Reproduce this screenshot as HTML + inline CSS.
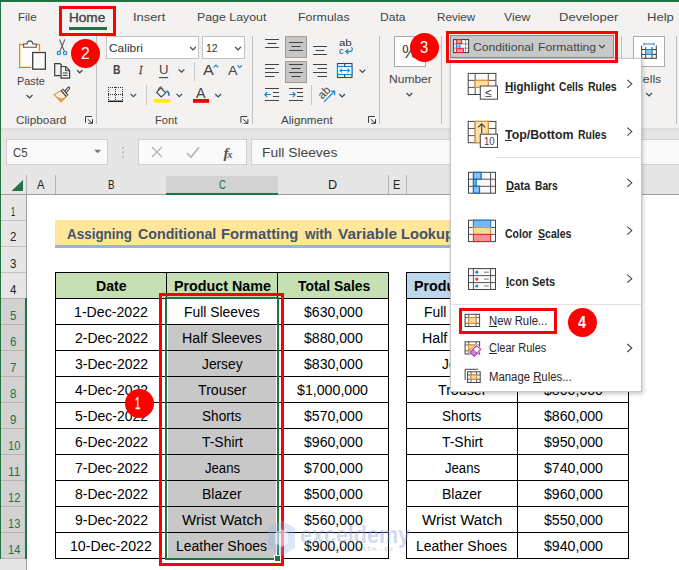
<!DOCTYPE html>
<html><head><meta charset="utf-8"><title>Excel Conditional Formatting</title>
<style>
html,body{margin:0;padding:0}
body{width:679px;height:570px;overflow:hidden;position:relative;background:#fff;font-family:"Liberation Sans",sans-serif}
.b{position:absolute;box-sizing:border-box}
.t{position:absolute;white-space:nowrap;transform-origin:0 0;line-height:1;display:block}
.t u{text-decoration:underline;text-underline-offset:1px}
svg{position:absolute;left:0;top:0;overflow:visible}
.circ{position:absolute;border-radius:50%;background:#fe0000}
</style></head><body>

<div class="b" style="left:0px;top:0px;width:679px;height:128px;background:#f3f2f1"></div>
<div class="b" style="left:0px;top:128px;width:679px;height:4px;background:linear-gradient(#dcdcdc,#e6e6e6)"></div>
<div class="b" style="left:0px;top:132px;width:679px;height:44px;background:#e6e6e6"></div>
<div class="b" style="left:0px;top:0px;width:679px;height:2px;background:#217346"></div>
<div class="b" style="left:68.8px;top:27px;width:38.3px;height:3px;background:#217346"></div>
<div class="b" style="left:96px;top:36px;width:1px;height:88px;background:#bfbfbf"></div>
<div class="b" style="left:252px;top:36px;width:1px;height:88px;background:#bfbfbf"></div>
<div class="b" style="left:379px;top:36px;width:1px;height:88px;background:#bfbfbf"></div>
<div class="b" style="left:441px;top:36px;width:1px;height:88px;background:#bfbfbf"></div>
<div class="b" style="left:621px;top:36px;width:1px;height:88px;background:#bfbfbf"></div>
<div class="b" style="left:676px;top:36px;width:1px;height:88px;background:#bfbfbf"></div>
<div class="b" style="left:194px;top:62px;width:1px;height:19px;background:#c8c6c4"></div>
<div class="b" style="left:146px;top:85px;width:1px;height:20px;background:#c8c6c4"></div>
<div class="b" style="left:311px;top:85px;width:1px;height:20px;background:#c8c6c4"></div>
<div class="b" style="left:105.5px;top:36px;width:93.5px;height:22.5px;background:#fff;border:1px solid #c3c3c3"></div>
<div class="b" style="left:202px;top:36px;width:43px;height:22.5px;background:#fff;border:1px solid #c3c3c3"></div>
<div class="b" style="left:285px;top:36px;width:22px;height:22px;background:#c8c6c4;border:1px solid #a19f9d"></div>
<div class="b" style="left:285px;top:60.5px;width:22px;height:22px;background:#c8c6c4;border:1px solid #a19f9d"></div>
<div class="b" style="left:394px;top:36px;width:32px;height:30.7px;background:#fff;border:1px solid #ababab"></div>
<div class="b" style="left:633px;top:36px;width:32px;height:30.7px;background:#fff;border:1px solid #ababab"></div>
<div class="b" style="left:450px;top:35px;width:163.5px;height:23.3px;background:#c8c8c8;border:1px solid #8a8a8a"></div>
<div class="b" style="left:6px;top:139px;width:101.5px;height:25.5px;background:#fafafa;border:1px solid #cfcfcf"></div>
<div class="b" style="left:138px;top:139px;width:109px;height:25.5px;background:#fafafa;border:1px solid #cfcfcf"></div>
<div class="b" style="left:251px;top:139px;width:440px;height:25.5px;background:#fafafa;border:1px solid #cfcfcf"></div>
<div class="b" style="left:0px;top:175.5px;width:679px;height:19px;background:#e6e6e6;border-bottom:1px solid #9f9f9f"></div>
<div class="b" style="left:166px;top:175.5px;width:111.5px;height:19.5px;background:#d2d2d2;border-bottom:2px solid #217346"></div>
<div class="b" style="left:26px;top:175px;width:1px;height:19px;background:#b5b5b5"></div>
<div class="b" style="left:55px;top:175px;width:1px;height:19px;background:#b5b5b5"></div>
<div class="b" style="left:388px;top:175px;width:1px;height:19px;background:#b5b5b5"></div>
<div class="b" style="left:406px;top:175px;width:1px;height:19px;background:#b5b5b5"></div>
<div class="b" style="left:0px;top:194.5px;width:26.5px;height:376px;background:#e6e6e6;border-right:1px solid #9f9f9f"></div>
<div class="b" style="left:0px;top:298px;width:27px;height:260.5px;background:#d2d2d2;border-right:2px solid #217346"></div>
<div class="b" style="left:1px;top:220px;width:25px;height:1px;background:#c2c2c2"></div>
<div class="b" style="left:1px;top:246px;width:25px;height:1px;background:#c2c2c2"></div>
<div class="b" style="left:1px;top:272px;width:25px;height:1px;background:#c2c2c2"></div>
<div class="b" style="left:1px;top:298px;width:24px;height:1px;background:#b4b4b4"></div>
<div class="b" style="left:1px;top:324px;width:24px;height:1px;background:#b4b4b4"></div>
<div class="b" style="left:1px;top:350px;width:24px;height:1px;background:#b4b4b4"></div>
<div class="b" style="left:1px;top:376px;width:24px;height:1px;background:#b4b4b4"></div>
<div class="b" style="left:1px;top:402px;width:24px;height:1px;background:#b4b4b4"></div>
<div class="b" style="left:1px;top:428px;width:24px;height:1px;background:#b4b4b4"></div>
<div class="b" style="left:1px;top:454px;width:24px;height:1px;background:#b4b4b4"></div>
<div class="b" style="left:1px;top:480px;width:24px;height:1px;background:#b4b4b4"></div>
<div class="b" style="left:1px;top:506px;width:24px;height:1px;background:#b4b4b4"></div>
<div class="b" style="left:1px;top:532px;width:24px;height:1px;background:#b4b4b4"></div>
<div class="b" style="left:1px;top:558px;width:24px;height:1px;background:#b4b4b4"></div>
<div class="b" style="left:0px;top:0px;width:1px;height:558.5px;background:#217346"></div>
<div class="b" style="left:55px;top:220px;width:574px;height:28px;background:#ffe699;border-bottom:3px solid #9bb2e0"></div>
<div class="b" style="left:168px;top:324px;width:108px;height:234px;background:#c8c8c8"></div>
<div class="b" style="left:55px;top:272px;width:334px;height:26px;background:#c6e0b4"></div>
<div class="b" style="left:55px;top:272px;width:334px;height:1px;background:#000"></div>
<div class="b" style="left:55px;top:298px;width:334px;height:1px;background:#000"></div>
<div class="b" style="left:55px;top:324px;width:334px;height:1px;background:#000"></div>
<div class="b" style="left:55px;top:350px;width:334px;height:1px;background:#000"></div>
<div class="b" style="left:55px;top:376px;width:334px;height:1px;background:#000"></div>
<div class="b" style="left:55px;top:402px;width:334px;height:1px;background:#000"></div>
<div class="b" style="left:55px;top:428px;width:334px;height:1px;background:#000"></div>
<div class="b" style="left:55px;top:454px;width:334px;height:1px;background:#000"></div>
<div class="b" style="left:55px;top:480px;width:334px;height:1px;background:#000"></div>
<div class="b" style="left:55px;top:506px;width:334px;height:1px;background:#000"></div>
<div class="b" style="left:55px;top:532px;width:334px;height:1px;background:#000"></div>
<div class="b" style="left:55px;top:558px;width:334px;height:1px;background:#000"></div>
<div class="b" style="left:55px;top:272px;width:1px;height:287px;background:#000"></div>
<div class="b" style="left:166px;top:272px;width:1px;height:287px;background:#000"></div>
<div class="b" style="left:277px;top:272px;width:1px;height:287px;background:#000"></div>
<div class="b" style="left:388px;top:272px;width:1px;height:287px;background:#000"></div>
<div class="b" style="left:406px;top:272px;width:223px;height:26px;background:#bdd7ee"></div>
<div class="b" style="left:406px;top:272px;width:223px;height:1px;background:#000"></div>
<div class="b" style="left:406px;top:298px;width:223px;height:1px;background:#000"></div>
<div class="b" style="left:406px;top:324px;width:223px;height:1px;background:#000"></div>
<div class="b" style="left:406px;top:350px;width:223px;height:1px;background:#000"></div>
<div class="b" style="left:406px;top:376px;width:223px;height:1px;background:#000"></div>
<div class="b" style="left:406px;top:402px;width:223px;height:1px;background:#000"></div>
<div class="b" style="left:406px;top:428px;width:223px;height:1px;background:#000"></div>
<div class="b" style="left:406px;top:454px;width:223px;height:1px;background:#000"></div>
<div class="b" style="left:406px;top:480px;width:223px;height:1px;background:#000"></div>
<div class="b" style="left:406px;top:506px;width:223px;height:1px;background:#000"></div>
<div class="b" style="left:406px;top:532px;width:223px;height:1px;background:#000"></div>
<div class="b" style="left:406px;top:558px;width:223px;height:1px;background:#000"></div>
<div class="b" style="left:406px;top:272px;width:1px;height:287px;background:#000"></div>
<div class="b" style="left:517px;top:272px;width:1px;height:287px;background:#000"></div>
<div class="b" style="left:628px;top:272px;width:1px;height:287px;background:#000"></div>
<div class="b" style="left:165px;top:297px;width:114px;height:263px;border:2px solid #217346"></div>
<div class="b" style="left:274px;top:555px;width:7px;height:7px;background:#217346;border:1px solid #fff"></div>
<div class="b" style="left:159px;top:293px;width:125px;height:273px;border:3px solid #fe0000"></div>
<span class="t" style="left:18.40px;top:12.00px;font-size:11.5px;color:#444;transform:scaleX(1.0036)">File</span>
<span class="t" style="left:69.40px;top:12.00px;font-size:12px;color:#444;transform:scaleX(1.1319);-webkit-text-stroke:0.35px #444">Home</span>
<span class="t" style="left:132.88px;top:12.00px;font-size:11.5px;color:#444;transform:scaleX(1.1202)">Insert</span>
<span class="t" style="left:197.40px;top:12.00px;font-size:11.5px;color:#444;transform:scaleX(1.0736)">Page Layout</span>
<span class="t" style="left:298.40px;top:12.00px;font-size:11.5px;color:#444;transform:scaleX(1.0794)">Formulas</span>
<span class="t" style="left:380.40px;top:12.00px;font-size:11.5px;color:#444;transform:scaleX(1.0484)">Data</span>
<span class="t" style="left:436.60px;top:12.00px;font-size:11.5px;color:#444;transform:scaleX(1.0156)">Review</span>
<span class="t" style="left:504.00px;top:12.00px;font-size:11.5px;color:#444;transform:scaleX(1.0624)">View</span>
<span class="t" style="left:559.00px;top:12.00px;font-size:11.5px;color:#444;transform:scaleX(1.1333)">Developer</span>
<span class="t" style="left:647.00px;top:12.00px;font-size:11.5px;color:#444;transform:scaleX(1.1352)">Help</span>
<span class="t" style="left:16.75px;top:76.00px;font-size:11.5px;color:#444;transform:scaleX(0.9479)">Paste</span>
<span class="t" style="left:15.50px;top:115.00px;font-size:11.5px;color:#444;transform:scaleX(1.0240)">Clipboard</span>
<span class="t" style="left:108.50px;top:43.00px;font-size:11.5px;color:#333;transform:scaleX(1.0363)">Calibri</span>
<span class="t" style="left:205.90px;top:43.00px;font-size:11.5px;color:#333;transform:scaleX(0.9116)">12</span>
<span class="t" style="left:112.50px;top:64.00px;font-size:12.5px;color:#444;transform:scaleX(0.8333);font-weight:700">B</span>
<span class="t" style="left:138.75px;top:63.00px;font-size:13.5px;color:#444;transform:scaleX(0.7500);font-style:italic;font-family:'Liberation Serif',serif;-webkit-text-stroke:0.3px #444">I</span>
<span class="t" style="left:159.25px;top:64.00px;font-size:12px;color:#444;transform:scaleX(1.0938)">U</span>
<span class="t" style="left:203.00px;top:62.00px;font-size:15.5px;color:#444;transform:scaleX(1.0455)">A</span>
<span class="t" style="left:228.00px;top:65.00px;font-size:12px;color:#444;transform:scaleX(1.1875)">A</span>
<span class="t" style="left:196.30px;top:86.00px;font-size:14px;color:#444;transform:scaleX(1.0200)">A</span>
<span class="t" style="left:154.50px;top:115.00px;font-size:11.5px;color:#444;transform:scaleX(0.9657)">Font</span>
<span class="t" style="left:281.25px;top:115.00px;font-size:11.5px;color:#444;transform:scaleX(1.0107)">Alignment</span>
<span class="t" style="left:388.75px;top:74.00px;font-size:11.5px;color:#444;transform:scaleX(1.0469)">Number</span>
<span class="t" style="left:402.00px;top:43.00px;font-size:18.5px;color:#444;transform:scaleX(0.9688)">%</span>
<span class="t" style="left:472.70px;top:42.00px;font-size:11.5px;color:#444;transform:scaleX(1.0529)">Conditional</span>
<span class="t" style="left:537.60px;top:42.00px;font-size:11.5px;color:#444;transform:scaleX(1.0574)">Formatting</span>
<span class="t" style="left:633.50px;top:74.00px;font-size:11.5px;color:#444;transform:scaleX(1.0655)">Cells</span>
<span class="t" style="left:13.30px;top:147.00px;font-size:12.5px;color:#444;transform:scaleX(0.9110)">C5</span>
<span class="t" style="left:261.89px;top:147.00px;font-size:12.5px;color:#444;transform:scaleX(1.1072)">Full Sleeves</span>
<span class="t" style="left:37.00px;top:179.00px;font-size:12.5px;color:#222;transform:scaleX(0.9000)">A</span>
<span class="t" style="left:108.11px;top:179.00px;font-size:12.5px;color:#222;transform:scaleX(0.7857)">B</span>
<span class="t" style="left:219.20px;top:179.00px;font-size:12.5px;color:#217346;transform:scaleX(0.7556)">C</span>
<span class="t" style="left:328.09px;top:179.00px;font-size:12.5px;color:#222;transform:scaleX(1.0125)">D</span>
<span class="t" style="left:393.43px;top:179.00px;font-size:12.5px;color:#222;transform:scaleX(0.8714)">E</span>
<span class="t" style="left:11.20px;top:205.00px;font-size:13px;color:#222;transform:scaleX(0.5714)">1</span>
<span class="t" style="left:10.10px;top:230.00px;font-size:13px;color:#222;transform:scaleX(0.8857)">2</span>
<span class="t" style="left:10.10px;top:257.00px;font-size:13px;color:#222;transform:scaleX(0.8857)">3</span>
<span class="t" style="left:10.10px;top:283.00px;font-size:13px;color:#222;transform:scaleX(0.8857)">4</span>
<span class="t" style="left:10.10px;top:309.00px;font-size:13px;color:#217346;transform:scaleX(0.8857)">5</span>
<span class="t" style="left:10.10px;top:335.00px;font-size:13px;color:#217346;transform:scaleX(0.8857)">6</span>
<span class="t" style="left:10.10px;top:361.00px;font-size:13px;color:#217346;transform:scaleX(0.8857)">7</span>
<span class="t" style="left:10.10px;top:387.00px;font-size:13px;color:#217346;transform:scaleX(0.8857)">8</span>
<span class="t" style="left:10.10px;top:413.00px;font-size:13px;color:#217346;transform:scaleX(0.8857)">9</span>
<span class="t" style="left:8.20px;top:439.00px;font-size:13px;color:#217346;transform:scaleX(0.8573)">10</span>
<span class="t" style="left:8.20px;top:465.00px;font-size:13px;color:#217346;transform:scaleX(0.9197)">11</span>
<span class="t" style="left:8.20px;top:491.00px;font-size:13px;color:#217346;transform:scaleX(0.8573)">12</span>
<span class="t" style="left:8.20px;top:517.00px;font-size:13px;color:#217346;transform:scaleX(0.8573)">13</span>
<span class="t" style="left:8.20px;top:543.00px;font-size:13px;color:#217346;transform:scaleX(0.8573)">14</span>
<span class="t" style="left:67.40px;top:226.00px;font-size:15px;color:#44546a;transform:scaleX(0.8958);font-weight:700">Assigning</span>
<span class="t" style="left:138.00px;top:226.00px;font-size:15px;color:#44546a;transform:scaleX(0.9488);font-weight:700">Conditional</span>
<span class="t" style="left:220.71px;top:226.00px;font-size:15px;color:#44546a;transform:scaleX(0.9862);font-weight:700">Formatting</span>
<span class="t" style="left:305.20px;top:226.00px;font-size:15px;color:#44546a;transform:scaleX(0.9050);font-weight:700">with</span>
<span class="t" style="left:338.40px;top:226.00px;font-size:15px;color:#44546a;transform:scaleX(1.0245);font-weight:700">Variable</span>
<span class="t" style="left:401.22px;top:226.00px;font-size:15px;color:#44546a;transform:scaleX(0.9775);font-weight:700">Lookup</span>
<span class="t" style="left:459.50px;top:226.00px;font-size:15px;color:#44546a;transform:scaleX(1.0471);font-weight:700">Table</span>
<span class="t" style="left:503.47px;top:226.00px;font-size:15px;color:#44546a;transform:scaleX(1.0273);font-weight:700">in</span>
<span class="t" style="left:521.46px;top:226.00px;font-size:15px;color:#44546a;transform:scaleX(1.0386);font-weight:700">Excel</span>
<span class="t" style="left:95.60px;top:279.00px;font-size:14px;color:#000;transform:scaleX(1.0079);font-weight:700">Date</span>
<span class="t" style="left:173.80px;top:279.00px;font-size:14px;color:#000;transform:scaleX(1.0218);font-weight:700">Product Name</span>
<span class="t" style="left:297.60px;top:279.00px;font-size:14px;color:#000;transform:scaleX(0.9905);font-weight:700">Total Sales</span>
<span class="t" style="left:413.80px;top:279.00px;font-size:14px;color:#000;transform:scaleX(1.0218);font-weight:700">Product Name</span>
<span class="t" style="left:537.60px;top:279.00px;font-size:14px;color:#000;transform:scaleX(0.9905);font-weight:700">Total Sales</span>
<span class="t" style="left:73.59px;top:305.00px;font-size:14px;color:#000;transform:scaleX(1.0115)">1-Dec-2022</span>
<span class="t" style="left:183.76px;top:305.00px;font-size:14px;color:#000;transform:scaleX(0.9926)">Full Sleeves</span>
<span class="t" style="left:303.50px;top:305.00px;font-size:14px;color:#000;transform:scaleX(1.0067)">$630,000</span>
<span class="t" style="left:423.76px;top:305.00px;font-size:14px;color:#000;transform:scaleX(0.9926)">Full Sleeves</span>
<span class="t" style="left:543.60px;top:305.00px;font-size:14px;color:#000;transform:scaleX(1.0101)">$620,000</span>
<span class="t" style="left:74.60px;top:331.00px;font-size:14px;color:#000;transform:scaleX(0.9977)">2-Dec-2022</span>
<span class="t" style="left:181.68px;top:331.00px;font-size:14px;color:#000;transform:scaleX(1.0156)">Half Sleeves</span>
<span class="t" style="left:303.50px;top:331.00px;font-size:14px;color:#000;transform:scaleX(1.0067)">$880,000</span>
<span class="t" style="left:421.68px;top:331.00px;font-size:14px;color:#000;transform:scaleX(1.0156)">Half Sleeves</span>
<span class="t" style="left:543.60px;top:331.00px;font-size:14px;color:#000;transform:scaleX(1.0101)">$870,000</span>
<span class="t" style="left:74.60px;top:357.00px;font-size:14px;color:#000;transform:scaleX(0.9977)">3-Dec-2022</span>
<span class="t" style="left:201.85px;top:357.00px;font-size:14px;color:#000;transform:scaleX(0.9822)">Jersey</span>
<span class="t" style="left:303.50px;top:357.00px;font-size:14px;color:#000;transform:scaleX(1.0067)">$830,000</span>
<span class="t" style="left:441.85px;top:357.00px;font-size:14px;color:#000;transform:scaleX(0.9822)">Jersey</span>
<span class="t" style="left:543.60px;top:357.00px;font-size:14px;color:#000;transform:scaleX(1.0101)">$820,000</span>
<span class="t" style="left:74.60px;top:383.00px;font-size:14px;color:#000;transform:scaleX(0.9977)">4-Dec-2022</span>
<span class="t" style="left:197.75px;top:383.00px;font-size:14px;color:#000;transform:scaleX(1.0135)">Trouser</span>
<span class="t" style="left:297.40px;top:383.00px;font-size:14px;color:#000;transform:scaleX(1.0131)">$1,000,000</span>
<span class="t" style="left:437.75px;top:383.00px;font-size:14px;color:#000;transform:scaleX(1.0135)">Trouser</span>
<span class="t" style="left:543.60px;top:383.00px;font-size:14px;color:#000;transform:scaleX(1.0101)">$800,000</span>
<span class="t" style="left:74.60px;top:409.00px;font-size:14px;color:#000;transform:scaleX(0.9977)">5-Dec-2022</span>
<span class="t" style="left:202.45px;top:409.00px;font-size:14px;color:#000;transform:scaleX(0.9713)">Shorts</span>
<span class="t" style="left:303.50px;top:409.00px;font-size:14px;color:#000;transform:scaleX(1.0067)">$570,000</span>
<span class="t" style="left:442.45px;top:409.00px;font-size:14px;color:#000;transform:scaleX(0.9713)">Shorts</span>
<span class="t" style="left:543.60px;top:409.00px;font-size:14px;color:#000;transform:scaleX(1.0101)">$860,000</span>
<span class="t" style="left:74.60px;top:435.00px;font-size:14px;color:#000;transform:scaleX(0.9977)">6-Dec-2022</span>
<span class="t" style="left:201.55px;top:435.00px;font-size:14px;color:#000;transform:scaleX(0.9942)">T-Shirt</span>
<span class="t" style="left:303.50px;top:435.00px;font-size:14px;color:#000;transform:scaleX(1.0067)">$960,000</span>
<span class="t" style="left:441.55px;top:435.00px;font-size:14px;color:#000;transform:scaleX(0.9942)">T-Shirt</span>
<span class="t" style="left:543.60px;top:435.00px;font-size:14px;color:#000;transform:scaleX(1.0101)">$950,000</span>
<span class="t" style="left:74.60px;top:461.00px;font-size:14px;color:#000;transform:scaleX(0.9977)">7-Dec-2022</span>
<span class="t" style="left:204.60px;top:461.00px;font-size:14px;color:#000;transform:scaleX(0.9369)">Jeans</span>
<span class="t" style="left:303.50px;top:461.00px;font-size:14px;color:#000;transform:scaleX(1.0067)">$700,000</span>
<span class="t" style="left:444.60px;top:461.00px;font-size:14px;color:#000;transform:scaleX(0.9369)">Jeans</span>
<span class="t" style="left:543.60px;top:461.00px;font-size:14px;color:#000;transform:scaleX(1.0101)">$740,000</span>
<span class="t" style="left:74.60px;top:487.00px;font-size:14px;color:#000;transform:scaleX(0.9977)">8-Dec-2022</span>
<span class="t" style="left:201.60px;top:487.00px;font-size:14px;color:#000;transform:scaleX(0.9995)">Blazer</span>
<span class="t" style="left:303.50px;top:487.00px;font-size:14px;color:#000;transform:scaleX(1.0067)">$500,000</span>
<span class="t" style="left:441.60px;top:487.00px;font-size:14px;color:#000;transform:scaleX(0.9995)">Blazer</span>
<span class="t" style="left:543.60px;top:487.00px;font-size:14px;color:#000;transform:scaleX(1.0101)">$960,000</span>
<span class="t" style="left:74.60px;top:513.00px;font-size:14px;color:#000;transform:scaleX(0.9977)">9-Dec-2022</span>
<span class="t" style="left:182.35px;top:513.00px;font-size:14px;color:#000;transform:scaleX(1.0760)">Wrist Watch</span>
<span class="t" style="left:303.50px;top:513.00px;font-size:14px;color:#000;transform:scaleX(1.0067)">$560,000</span>
<span class="t" style="left:422.35px;top:513.00px;font-size:14px;color:#000;transform:scaleX(1.0760)">Wrist Watch</span>
<span class="t" style="left:543.60px;top:513.00px;font-size:14px;color:#000;transform:scaleX(1.0101)">$550,000</span>
<span class="t" style="left:69.69px;top:539.00px;font-size:14px;color:#000;transform:scaleX(1.0106)">10-Dec-2022</span>
<span class="t" style="left:176.10px;top:539.00px;font-size:14px;color:#000;transform:scaleX(0.9992)">Leather Shoes</span>
<span class="t" style="left:303.50px;top:539.00px;font-size:14px;color:#000;transform:scaleX(1.0067)">$900,000</span>
<span class="t" style="left:416.10px;top:539.00px;font-size:14px;color:#000;transform:scaleX(0.9992)">Leather Shoes</span>
<span class="t" style="left:543.60px;top:539.00px;font-size:14px;color:#000;transform:scaleX(1.0101)">$940,000</span>
<span class="t" style="left:339.00px;top:38.00px;font-size:9.5px;color:#333;transform:scaleX(1.2058)">ab</span>
<span class="t" style="left:339.30px;top:46.00px;font-size:9.5px;color:#333;transform:scaleX(0.9400)">c</span>
<span class="t" style="left:300.00px;top:524.00px;font-size:23.7px;color:rgba(140,165,230,.42);transform:scaleX(0.9083);font-weight:700">exceldemy</span>
<span class="t" style="left:318.00px;top:546.00px;font-size:6px;color:rgba(120,120,120,.38);transform:scaleX(1.4771)">EXCEL - DATA - BI</span>
<svg width="679" height="570" viewBox="0 0 679 570"><path d="M281.500 520.600l13.500 7.400v20l-13.500 8-13.500-8v-20z" fill="rgba(150,175,235,.32)"/><path d="M281.500 529l6.500 4v10l-6.500 4-6.500-4v-10z" fill="rgba(255,255,255,.5)"/></svg>
<span class="t" style="left:223.5px;top:143.5px;font:italic 700 15.5px 'Liberation Serif',serif;color:#555">f<span style="font-size:10.5px;margin-left:-1.5px">x</span></span>
<span class="t" style="left:324px;top:89.6px;font-size:11.5px;color:#444;transform:rotate(-45deg);transform-origin:0 100%">ab</span>
<svg width="679" height="570" viewBox="0 0 679 570" fill="none" stroke-linecap="butt">
<!-- paste -->
<rect x="19.600" y="44.400" width="20" height="23.100" fill="#fbfbfb" stroke="#e07b00" stroke-width="1"/>
<rect x="20.600" y="45.400" width="18" height="21.100" stroke="#fbe3a0" stroke-width="1"/>
<path d="M23.600 47.200v-3.200h3.400c.4-4.200 5.400-4.200 5.800 0h3.400v3.200z" fill="#fbfbfb" stroke="#555" stroke-width="1.100"/>
<rect x="31.300" y="51.200" width="15.500" height="19.400" fill="#fff"/>
<rect x="32.700" y="52.500" width="12.700" height="16.700" fill="#fafafa" stroke="#3b3b3b" stroke-width="1.300"/>
<!-- paste chevron -->
<path d="M26.500 95l3 3 3-3" stroke="#444" stroke-width="1.200"/>
<!-- scissors -->
<path d="M59.500 39.500l4.700 11.400M64.800 39.500l-4.700 11.400" stroke="#5a5a5a" stroke-width="1.100"/>
<circle cx="58.900" cy="53" r="1.700" stroke="#1e8ad6" stroke-width="1.200"/>
<circle cx="65.100" cy="53" r="1.700" stroke="#1e8ad6" stroke-width="1.200"/>
<!-- copy -->
<path d="M60.600 75.600h-5.900v-12h5.300l1.400 1.400v1" stroke="#3b3b3b" stroke-width="1.200"/>
<path d="M61 66.500h4.600l4 4.100v7.600h-8.600z" fill="#f3f2f1" stroke="#3b3b3b" stroke-width="1.200"/>
<path d="M65.600 66.700v4h4M62.800 73h4.800M62.800 75.400h4.800" stroke="#3b3b3b" stroke-width="1"/>
<path d="M77 70.200l2.700 2.600 2.700-2.600" stroke="#444" stroke-width="1.200"/>
<!-- format painter -->
<path d="M61 90.800l-6.800 3.800 6.800 7.200 5-4.900z" fill="#fdf6ec" stroke="#e8912d" stroke-width="1.200"/>
<path d="M57.300 97.600l3.700 4 2.900-2.800z" fill="#f0a860" stroke="#e8912d" stroke-width=".6"/>
<path d="M68.600 88.300l-3.200 3.600" stroke="#444" stroke-width="3.200" stroke-linecap="round"/>
<path d="M68.600 88.300l-3.200 3.600" stroke="#f3f2f1" stroke-width="1.100" stroke-linecap="round"/>
<path d="M61.800 89.600l5.500 6.300" stroke="#444" stroke-width="3.200"/>
<path d="M62.300 90.200l4.500 5.100" stroke="#f3f2f1" stroke-width="1.100"/>
<!-- font dropdown chevrons -->
<path d="M190.2 47l2.8 2.8 2.8-2.8" stroke="#444" stroke-width="1.2"/>
<path d="M235.2 47l2.8 2.8 2.8-2.8" stroke="#444" stroke-width="1.2"/>
<!-- underline for U -->
<path d="M159 77.6h9.2" stroke="#444" stroke-width="1.1"/>
<path d="M178.6 69.3l2.9 2.9 2.9-2.9" stroke="#444" stroke-width="1.2"/>
<!-- grow/shrink carets -->
<path d="M213.6 67.4l2.3-2.4 2.3 2.4" stroke="#1e8ad6" stroke-width="1.2"/>
<path d="M237.4 65.2l2.3 2.4 2.3-2.4" stroke="#1e8ad6" stroke-width="1.2"/>
<!-- borders icon -->
<path d="M108 87.500h15M108 94.500h15" stroke="#333" stroke-width="1" stroke-dasharray="1 1"/>
<path d="M108.500 87v14M115.500 87v14M122.500 87v14" stroke="#333" stroke-width="1" stroke-dasharray="1 1"/>
<path d="M108 101.300h15" stroke="#222" stroke-width="1.500"/>
<path d="M130.600 93.900l2.800 2.700 2.800-2.700" stroke="#444" stroke-width="1.200"/>
<!-- fill bucket -->
<path d="M160.600 87.800l5.300 5-4.600 4.200-4.700-4.600z" stroke="#444" stroke-width="1.100" fill="#f3f2f1"/>
<path d="M158.800 90.200c-.6-1.600.2-3 1.600-3.200 1.200-.1 2.200.8 2.600 2.400" stroke="#444" stroke-width=".9"/>
<path d="M166.300 91c2 .6 3 2.400 2.600 4.800" stroke="#1e6fc0" stroke-width="1.500"/>
<rect x="154" y="99" width="16.300" height="3.700" fill="#ffee00" stroke="none"/>
<path d="M176.500 93.900l2.800 2.700 2.800-2.700" stroke="#444" stroke-width="1.200"/>
<!-- font color bar -->
<rect x="193" y="99" width="16" height="3.8" fill="#f00000" stroke="none"/>
<path d="M215.2 94l2.9 2.9 2.9-2.9" stroke="#444" stroke-width="1.2"/>
<!-- dialog launchers -->
<g stroke="#3b3b3b" stroke-width="1">
<path d="M85.5 122.800V116.500H91.9M87.8 119.300L92.4 123.300M88.2 123.300H92.5V119.200"/>
<path d="M240.9 122.800V116.500H247.3M243.2 119.300L247.8 123.300M243.6 123.300H247.9V119.200"/>
<path d="M368.5 122.800V116.500H374.9M370.8 119.300L375.4 123.300M371.2 123.300H375.5V119.200"/>
</g>
<!-- alignment icons -->
<g stroke="#444" stroke-width="1.1">
<path d="M265 39.500h14M267.500 43.500h9M265 47.500h14"/>
<path d="M289 42.500h14M291.500 46.500h9M289 50.500h14"/>
<path d="M313 46.500h14M315.500 50.500h9M313 54.500h14"/>
<path d="M265 64.500h14M265 68.500h9.500M265 72.500h14M265 76.500h9.500"/>
<path d="M289 64.500h14M291.500 68.500h9M289 72.500h14M291.500 76.500h9"/>
<path d="M313 64.500h14M317.500 68.500h9.500M313 72.500h14M317.500 76.500h9.500"/>
<path d="M265 88.500h14M273 92.500h6M273 96.500h6M265 100.500h14"/>
<path d="M289 88.500h14M297 92.500h6M297 96.500h6M289 100.500h14"/>
</g>
<g stroke="#1e8ad6" stroke-width="1.2">
<path d="M271 94.500h-6M267.300 92l-2.500 2.500 2.500 2.500"/>
<path d="M289.200 94.500h6M292.700 92l2.500 2.500-2.500 2.500"/>
</g>
<!-- wrap text -->
<path d="M351.300 47.200c1.500.8 1.500 4-1.200 4.400h-4.600M348.300 49.200l-2.600 2.400 2.600 2.400" stroke="#1e8ad6" stroke-width="1.2"/>
<!-- merge -->
<rect x="337.500" y="63.500" width="14.500" height="14" stroke="#444" stroke-width="1.100"/>
<rect x="337.500" y="66.500" width="14.500" height="8" fill="#fafafa" stroke="#1e8ad6" stroke-width="1.200"/>
<path d="M344.700 63.500v3M344.700 74.500v3" stroke="#444" stroke-width="1.100"/>
<path d="M340 70.500h9.500M342 68.600l-2 1.900 2 1.900M347.500 68.600l2 1.900-2 1.900" stroke="#1e8ad6" stroke-width="1.100"/>
<path d="M359.600 69.600l2.900 2.900 2.900-2.900" stroke="#444" stroke-width="1.200"/>
<!-- orientation -->
<path d="M324 101.800l10.300-10.300M334.600 95.200v-4h-4" stroke="#1e8ad6" stroke-width="1.200"/>
<path d="M339.200 94l2.900 2.900 2.900-2.900" stroke="#444" stroke-width="1.200"/>
<!-- number chevron, cells chevron -->
<path d="M406.500 93l2.900 2.900 2.900-2.900" stroke="#444" stroke-width="1.200"/>
<path d="M646.200 93l2.900 2.900 2.900-2.900" stroke="#444" stroke-width="1.200"/>
<!-- cells icon -->
<path d="M641.700 45.500v12.800M645.700 47v11.300M652 47v11.300M656.300 45.500v12.800M641.700 49.500h14.600M641.700 54.400h14.600M641.200 58.300h15.600" stroke="#3b3b3b" stroke-width="1"/>
<rect x="645.700" y="49.500" width="6.300" height="4.900" fill="#86c3f3" stroke="#1e8ad6" stroke-width="1"/>
<path d="M644 44h10M644 42.600v2.800M654 42.600v2.800" stroke="#1e8ad6" stroke-width="1"/>
<!-- CF icon -->
<rect x="453.600" y="39.600" width="15" height="13" fill="#fff" stroke="#333" stroke-width="1"/>
<path d="M453.600 43.900h15M453.600 48.200h15M456.300 39.600v13M465.600 39.600v13" stroke="#777" stroke-width=".8"/>
<rect x="456.600" y="39.700" width="5" height="3.800" fill="#f7a1ab" stroke="#e32020" stroke-width="1"/>
<rect x="456.300" y="44.400" width="3.800" height="3.500" fill="#8cc6f7"/>
<path d="M456.500 44.300v3.700M460 44.300v3.700" stroke="#1878d0" stroke-width=".9"/>
<rect x="456.600" y="48.700" width="6.800" height="3.800" fill="#f7a1ab" stroke="#e32020" stroke-width="1"/>
<path d="M599.200 45l2.800 2.800 2.800-2.800" stroke="#444" stroke-width="1.200"/>
<!-- formula bar icons -->
<path d="M94.200 149.700h7l-3.500 3.600z" fill="#777" stroke="none"/>
<path d="M123 147v1.400M123 151.500v1.400M123 156v1.400" stroke="#a6a6a6" stroke-width="1.500"/>
<path d="M152 147l10 10M162 147l-10 10" stroke="#b4b4b4" stroke-width="1.400"/>
<path d="M187 153l4 4.200 8-10" stroke="#b4b4b4" stroke-width="1.700"/>
<!-- select all triangle -->
<path d="M23 180v11h-11.500z" fill="#217346" stroke="none"/>
</svg>

<div class="b" style="left:59px;top:6px;width:57px;height:30px;border:3px solid #fe0000"></div>
<div class="b" style="left:450px;top:58px;width:192px;height:334px;background:#fff;border:1px solid #c6c6c6;box-shadow:1px 2px 4px rgba(0,0,0,.22)"></div>
<div class="b" style="left:496px;top:157px;width:145px;height:1px;background:#e1e1e1"></div>
<div class="b" style="left:452px;top:304px;width:189px;height:1px;background:#e1e1e1"></div>
<svg width="679" height="570" viewBox="0 0 679 570" fill="none">
<!-- highlight cells -->
<rect x="468.200" y="73.400" width="27.700" height="21.100" fill="#fafafa" stroke="#444" stroke-width="1"/>
<path d="M468.200 80.400h27.700M468.200 87.400h27.700M475.200 73.400v21.100M488.300 73.400v21.100" stroke="#444" stroke-width=".9"/>
<rect x="475.200" y="80.400" width="13.100" height="7" fill="#fbe0a8" stroke="#e8912d" stroke-width="1.200"/>
<rect x="480.300" y="86" width="17.200" height="13.200" fill="#fff" stroke="#444" stroke-width="1"/>
<!-- top/bottom -->
<rect x="468.200" y="121.400" width="27.700" height="21.300" fill="#fafafa" stroke="#444" stroke-width="1"/>
<path d="M468.200 128.500h27.700M468.200 135.600h27.700M475.200 121.400v21.300M488.300 121.400v21.300" stroke="#444" stroke-width=".9"/>
<rect x="475.200" y="121.400" width="13.100" height="21.300" fill="#fbe0a8" stroke="#e8912d" stroke-width="1.200"/>
<path d="M481.700 133.500v-9.500M478.200 127.300l3.500-3.500 3.500 3.500" stroke="#444" stroke-width="1.100"/>
<rect x="480.300" y="134.200" width="17.200" height="13.200" fill="#fff" stroke="#444" stroke-width="1"/>
<!-- data bars -->
<rect x="468.500" y="172.300" width="27" height="20.900" fill="#fafafa" stroke="#444" stroke-width="1"/>
<path d="M468.500 179.200h27M468.500 186.300h27M473.400 172.300v20.900M490.600 172.300v20.900" stroke="#444" stroke-width=".9"/>
<rect x="473.500" y="172.400" width="7.600" height="6.800" fill="#8cc2f0" stroke="#1470c4" stroke-width="1.300"/>
<rect x="473.500" y="179.200" width="2.600" height="7" fill="#8cc2f0" stroke="#1470c4" stroke-width="1.300"/>
<rect x="473.500" y="186.200" width="6" height="6.900" fill="#8cc2f0" stroke="#1470c4" stroke-width="1.300"/>
<!-- color scales -->
<rect x="468.500" y="220.200" width="27" height="21.400" fill="#fafafa" stroke="#444" stroke-width="1"/>
<path d="M468.500 227.500h27M468.500 234.400h27" stroke="#444" stroke-width=".9"/>
<rect x="473.400" y="220.200" width="17.200" height="7.300" fill="#7cb8ee" stroke="#1e73c8" stroke-width="1"/>
<rect x="473.400" y="227.500" width="17.200" height="6.900" fill="#f8dc8e" stroke="#e8912d" stroke-width="1"/>
<rect x="473.400" y="234.400" width="17.200" height="7.200" fill="#fa8f98" stroke="#e02030" stroke-width="1"/>
<!-- icon sets -->
<rect x="468.500" y="268.600" width="27" height="20.900" fill="#fafafa" stroke="#444" stroke-width="1"/>
<path d="M468.500 275.600h27M468.500 282.600h27M473.400 268.600v20.900M490.600 268.600v20.900" stroke="#444" stroke-width=".9"/>
<circle cx="476.800" cy="272.200" r="1.600" fill="#2b88d8"/><circle cx="476.800" cy="279.100" r="1.600" fill="#e8364a"/><circle cx="476.800" cy="286" r="1.600" fill="#2b88d8"/>
<path d="M484 272.200h4.800M484 279.100h4.800M484 286h4.800" stroke="#555" stroke-width=".8"/>
<!-- arrows -->
<g stroke="#444" stroke-width="1.100">
<path d="M627.300 79.8l4.500 4-4.500 4"/>
<path d="M627.300 127.6l4.500 4-4.500 4"/>
<path d="M627.300 178.8l4.500 4-4.500 4"/>
<path d="M627.300 226.6l4.500 4-4.500 4"/>
<path d="M627.300 274.7l4.500 4-4.500 4"/>
<path d="M627.300 344.0l4.500 4-4.500 4"/>
</g>
<!-- new rule -->
<rect x="465.100" y="314.300" width="14.500" height="12.200" fill="#fff" stroke="#444" stroke-width="1"/>
<path d="M465.100 317.500h14.500M465.100 323.300h14.500M468.700 314.300v12.200M476 314.300v12.200" stroke="#555" stroke-width=".9"/>
<rect x="468.700" y="317.500" width="7.300" height="5.800" fill="#fbd9a0" stroke="#e8912d" stroke-width="1.100"/>
<!-- clear rules -->
<rect x="465.100" y="341.800" width="14.500" height="12.200" fill="#fff" stroke="#444" stroke-width="1"/>
<path d="M465.100 345h14.500M465.100 350.800h14.500M468.700 341.800v12.200M476 341.800v12.200" stroke="#555" stroke-width=".9"/>
<path d="M468.700 345h7.300l-7.300 5.800z" fill="#fbd9a0" stroke="#e8912d" stroke-width="1.100"/>
<path d="M476.400 345.600l4.300 3.700-6.300 7-4.300-3.700z" fill="#fff" stroke="#fff" stroke-width="2.400"/>
<path d="M476.400 345.600l4.300 3.700-6.300 7-4.300-3.700z" fill="#fff" stroke="#a035b0" stroke-width="1.100"/>
<path d="M472.900 349.500l4.300 3.700-2.800 3.100-4.300-3.700z" fill="#c58ad0" stroke="#a035b0" stroke-width=".8"/>
<!-- manage rules -->
<path d="M465.100 380v-10.700h13" stroke="#444" stroke-width="1"/>
<rect x="467.600" y="371.800" width="12.600" height="10.700" fill="#fff" stroke="#444" stroke-width="1"/>
<path d="M467.600 375h12.600M467.600 379.200h12.600M471 371.800v10.700M476.600 371.800v10.700" stroke="#555" stroke-width=".9"/>
<rect x="471" y="375" width="5.600" height="4.200" fill="#fbd9a0" stroke="#e8912d" stroke-width="1.100"/>
</svg>

<span class="t" style="left:505.40px;top:81.00px;font-size:12.5px;color:#262626;transform:scaleX(0.9184);font-weight:700"><u>H</u>ighlight</span>
<span class="t" style="left:559.40px;top:81.00px;font-size:12.5px;color:#262626;transform:scaleX(0.8187);font-weight:700">Cells</span>
<span class="t" style="left:588.10px;top:81.00px;font-size:12.5px;color:#262626;transform:scaleX(0.8420);font-weight:700">Rules</span>
<span class="t" style="left:505.40px;top:129.00px;font-size:12.5px;color:#262626;transform:scaleX(0.9888);font-weight:700"><u>T</u>op/Bottom</span>
<span class="t" style="left:578.10px;top:129.00px;font-size:12.5px;color:#262626;transform:scaleX(0.8361);font-weight:700">Rules</span>
<span class="t" style="left:505.70px;top:180.00px;font-size:12.5px;color:#262626;transform:scaleX(0.8955);font-weight:700"><u>D</u>ata</span>
<span class="t" style="left:535.30px;top:180.00px;font-size:12.5px;color:#262626;transform:scaleX(0.8189);font-weight:700">Bars</span>
<span class="t" style="left:505.30px;top:228.00px;font-size:12.5px;color:#262626;transform:scaleX(0.8392);font-weight:700">Color</span>
<span class="t" style="left:537.50px;top:228.00px;font-size:12.5px;color:#262626;transform:scaleX(0.8446);font-weight:700"><u>S</u>cales</span>
<span class="t" style="left:505.90px;top:276.00px;font-size:12.5px;color:#262626;transform:scaleX(0.8819);font-weight:700"><u>I</u>con</span>
<span class="t" style="left:532.40px;top:276.00px;font-size:12.5px;color:#262626;transform:scaleX(0.8771);font-weight:700">Sets</span>
<span class="t" style="left:489.30px;top:315.00px;font-size:12px;color:#262626;transform:scaleX(0.9402)"><u>N</u>ew Rule...</span>
<span class="t" style="left:489.30px;top:342.00px;font-size:12px;color:#262626;transform:scaleX(0.9140)"><u>C</u>lear Rules</span>
<span class="t" style="left:489.30px;top:371.00px;font-size:12px;color:#262626;transform:scaleX(0.9455)">Manage <u>R</u>ules...</span>
<span class="t" style="left:485.30px;top:87.00px;font-size:12px;color:#333;transform:scaleX(1.0000)">≤</span>
<span class="t" style="left:483.60px;top:137.00px;font-size:10px;color:#444;transform:scaleX(0.9514)">10</span>
<div class="b" style="left:459px;top:308px;width:98px;height:26px;border:3px solid #fe0000"></div>
<div class="b" style="left:446px;top:31px;width:172.3px;height:32px;border:3px solid #fe0000"></div>
<div class="circ" style="left:70.80px;top:38.60px;width:29.5px;height:29.5px"></div>
<div class="circ" style="left:409.85px;top:32.50px;width:29.5px;height:29.5px"></div>
<div class="circ" style="left:124.80px;top:388.55px;width:29.5px;height:29.5px"></div>
<div class="circ" style="left:567.85px;top:307.65px;width:29.5px;height:29.5px"></div>
<span class="t" style="left:80.80px;top:46.00px;font-size:16.6px;color:#fff;transform:scaleX(0.9444)">2</span>
<span class="t" style="left:420.00px;top:39.00px;font-size:16.4px;color:#fff;transform:scaleX(0.9000)">3</span>
<span class="t" style="left:135.31px;top:395.00px;font-size:16.2px;color:#fff;transform:scaleX(0.5875);-webkit-text-stroke:0.3px #fff">1</span>
<span class="t" style="left:577.90px;top:314.00px;font-size:16.2px;color:#fff;transform:scaleX(0.8889);font-weight:700">4</span>
</body></html>
